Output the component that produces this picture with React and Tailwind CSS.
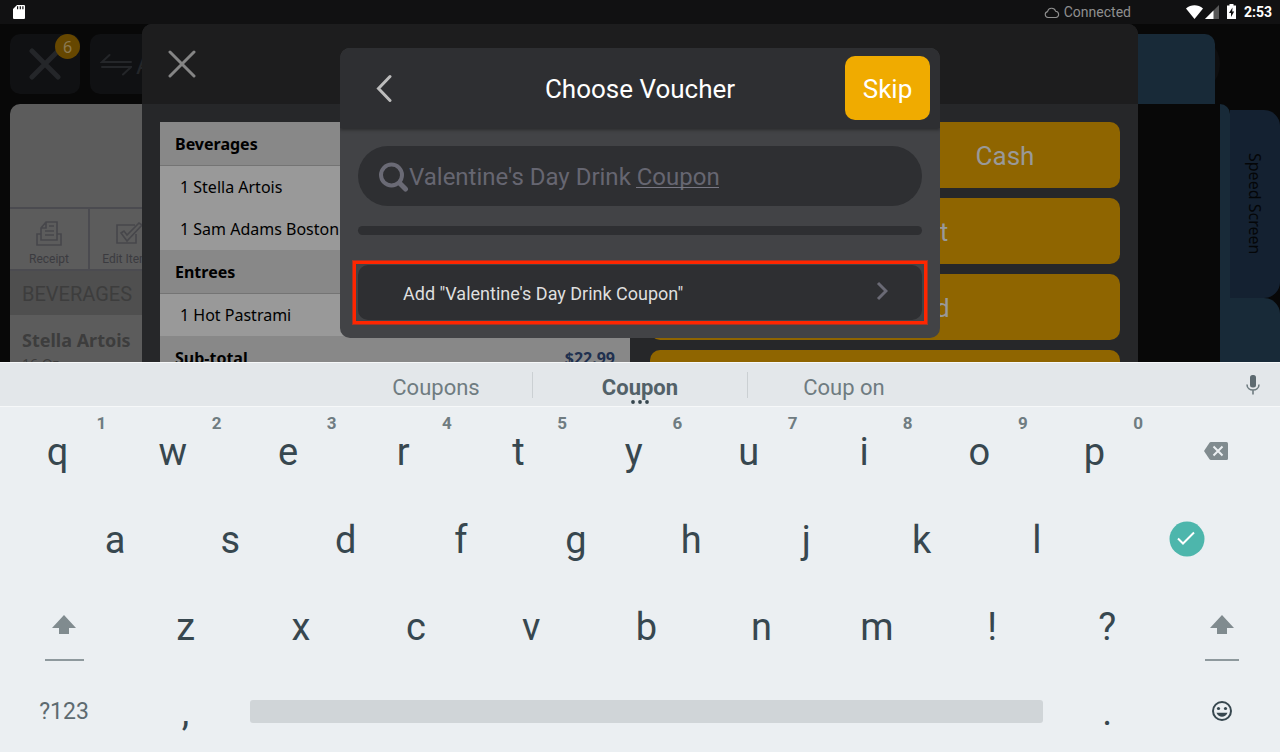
import React, { useState } from "react";

const orderLines = [
  { heading: "Beverages", items: ["1 Stella Artois", "1 Sam Adams Boston Lager"] },
  { heading: "Entrees", items: ["1 Hot Pastrami"] },
];

const payments = ["Split Credit", "Credit Card", "Gift Card"];

const topRow = ["q", "w", "e", "r", "t", "y", "u", "i", "o", "p"];
const homeRow = ["a", "s", "d", "f", "g", "h", "j", "k", "l"];
const bottomRow = ["z", "x", "c", "v", "b", "n", "m", "!", "?"];

const StatusBar = () => (
  <div className="flex h-6 shrink-0 items-center bg-[#111112] pl-3 pr-2">
    <svg className="h-4 w-4" viewBox="0 0 16 16" fill="#fff">
      <path
        fillRule="evenodd"
        d="M5 1h7a1 1 0 0 1 1 1v12a1 1 0 0 1-1 1H2a1 1 0 0 1-1-1V5zM5 2.200v3h1.200v-3zM7.700 2.200v3h1.200v-3zM10.300 2.200v3h1.200v-3z"
      />
    </svg>
    <div className="ml-auto flex items-center">
      <svg className="mr-1 h-4 w-4" viewBox="0 0 16 16" fill="none" stroke="#8f8f8f" strokeWidth="1.1">
        <path d="M4 13.500a3 3 0 0 1-.5-5.900A4.200 4.200 0 0 1 11.600 7.200a3.200 3.200 0 0 1 .6 6.300z" />
      </svg>
      <span className="mr-[55px] text-sm text-[#8f8f8f]">Connected</span>
      <svg className="mr-0.5 h-4 w-[17px]" viewBox="0 0 17 16" fill="#fff">
        <path d="M0 4.500C5 .3 12 .3 17 4.500L8.500 15z" />
      </svg>
      <svg className="mr-2 h-4 w-[14px]" viewBox="0 0 14 16">
        <path d="M14 1v14H0z" fill="#585858" />
        <path d="M8.500 6.500V15H0z" fill="#fff" />
      </svg>
      <svg className="mr-2 h-4 w-[9px]" viewBox="0 0 9 16">
        <path d="M2.500 0h4v1.500H9V15H0V1.500h2.500z" fill="#fff" />
        <path d="M5.500 3.500L2 9h2v4L7.200 7.500H5.200z" fill="#111112" />
      </svg>
      <span className="text-sm font-bold text-white">2:53</span>
    </div>
  </div>
);

// Order screen that stays dimmed behind the dialogs
const OrderScreen = () => (
  <div className="flex h-full flex-col bg-[#080808]">
    <div className="flex h-20 shrink-0 gap-2.5 pl-2.5 pt-2.5">
      <button className="relative flex h-[60px] w-[70px] items-center justify-center rounded-[10px] bg-[#101113]">
        <svg className="h-8 w-8" viewBox="0 0 32 32" stroke="#242629" strokeWidth="5" strokeLinecap="round">
          <path d="M3 3l26 26M29 3L3 29" />
        </svg>
        <span className="absolute right-0 top-0 flex h-[25px] w-[25px] items-center justify-center rounded-full bg-[#664700] font-['Noto_Sans'] text-base text-[#8c7a52]">
          6
        </span>
      </button>
      <button className="flex h-[60px] w-[160px] items-center gap-1 rounded-[10px] bg-[#101113] pl-2.5 pt-0.5 text-[26px] text-[#242629]">
        <svg className="h-6 w-[32px]" viewBox="0 0 32 24" fill="none" stroke="#242629" strokeWidth="2" strokeLinecap="round">
          <path d="M31 9H2l7.500-7M2 14h29l-8 7.500" />
        </svg>
        A
      </button>
      <div className="relative ml-auto mr-[65px] h-[70px] w-[300px]">
        <div className="absolute -right-[5px] top-0 h-[60px] w-[60px] rounded-full bg-[#0e0e0f]" />
        <div className="relative h-full rounded-tr-[10px] bg-[#182a38]" />
      </div>
    </div>
    <div className="flex min-h-0 flex-1 pl-2.5">
      <div className="mr-auto w-[400px] rounded-tl-[10px] bg-[#5c5c5c]">
        <div className="h-[103px]" />
        <div className="flex h-16 border-y-2 border-[#4b4b50] text-xs text-[#3b3b40]">
          <button className="flex w-20 flex-col items-center justify-end gap-1 border-r-2 border-[#4b4b50]">
            <svg className="h-[26px] w-[26px]" viewBox="0 0 26 26" fill="none" stroke="#47474b" strokeWidth="1.600">
              <path d="M5 13H1v11h24V13h-4M5 19V7l5-6h11v18zM5 7h5V1M13 5h5M9 10h9M9 14h9" />
            </svg>
            <span className="pb-0.5">Receipt</span>
          </button>
          <button className="flex w-20 flex-col items-center justify-end gap-1 border-r-2 border-[#4b4b50]">
            <svg className="h-[26px] w-[26px]" viewBox="0 0 26 26" fill="none" stroke="#47474b" strokeWidth="1.600">
              <path d="M19 4H1v18h19v-9M5 12l3-2 3 4L23 2l3 2L11 20z" />
            </svg>
            <span className="pb-0.5">Edit Items</span>
          </button>
        </div>
        <div className="flex h-11 items-center bg-[#4f4f4f] pl-3 pt-0.5 text-xl text-[#3d3d3d]">BEVERAGES</div>
        <div className="pl-3 pt-[11px] font-['Noto_Sans'] text-[#3d3d3d]">
          <p className="text-lg/7 font-bold">Stella Artois</p>
          <p className="text-sm/5">16 Oz</p>
        </div>
      </div>
      <div className="w-2.5 rounded-tr-[10px] bg-[#182a38]" />
      <div className="flex w-[50px] flex-col pt-1.5">
        <button className="flex h-[188px] items-center justify-center rounded-r-[16px] bg-[#142131] font-['Noto_Sans'] text-base text-[#040608] [writing-mode:vertical-rl]">
          Speed Screen
        </button>
        <div className="flex-1 rounded-tr-[16px] bg-[#182a38]" />
      </div>
    </div>
  </div>
);

const PayButton = ({ children }) => (
  <button className="flex h-[66px] w-full items-center justify-center rounded-[10px] bg-[#8f6500] pt-0.5 text-[26px] text-[#999]">
    {children}
  </button>
);

const PaymentDialog = () => (
  <div className="mx-auto h-full w-full max-w-[996px] overflow-hidden rounded-t-[10px] bg-[#262729]">
    <div className="flex h-20 items-center bg-[#1d1d1e] pl-[26px]">
      <button aria-label="Close">
        <svg className="h-7 w-7" viewBox="0 0 28 28" stroke="#858585" strokeWidth="3" strokeLinecap="round">
          <path d="M2 2l24 24M26 2L2 26" />
        </svg>
      </button>
    </div>
    <div className="grid grid-cols-2 gap-5 p-[18px]">
      <div className="bg-[#999] font-['Noto_Sans'] text-base text-black">
        {orderLines.map((group) => (
          <div key={group.heading}>
            <h3 className="flex h-11 items-center border-b border-[#747474] bg-[#888] pl-[15px] font-bold">
              {group.heading}
            </h3>
            {group.items.map((item) => (
              <p key={item} className="flex h-[42px] items-center pl-5">
                {item}
              </p>
            ))}
          </div>
        ))}
        <p className="flex h-11 items-center justify-between bg-[#888] px-[15px] font-bold">
          <span>Sub-total</span>
          <span className="text-[#20304f]">$22.99</span>
        </p>
      </div>
      <div className="flex flex-col gap-2.5">
        <div className="grid grid-cols-2 gap-2.5">
          <PayButton>Exact</PayButton>
          <PayButton>Cash</PayButton>
        </div>
        {payments.map((name) => (
          <PayButton key={name}>{name}</PayButton>
        ))}
      </div>
    </div>
  </div>
);

const VoucherDialog = () => {
  const [name, setName] = useState("Valentine's Day Drink Coupon");

  return (
    <div className="w-full max-w-[600px] overflow-hidden rounded-[10px] bg-[#424346]">
      <div className="grid h-20 grid-cols-[1fr_auto_1fr] items-center bg-[#2e2f32] pl-9 pr-2.5 shadow-[0_2px_3px_rgba(0,0,0,0.35)]">
        <button aria-label="Back" className="w-fit">
          <svg className="h-7 w-4" viewBox="0 0 16 28" fill="none" stroke="#bcbcbc" strokeWidth="3" strokeLinecap="round">
            <path d="M14 2.500L2.500 14.500l11.500 12" />
          </svg>
        </button>
        <h2 className="-ml-[26px] pt-0.5 text-[26px] text-white">Choose Voucher</h2>
        <button className="h-16 w-[85px] justify-self-end rounded-[10px] bg-[#f0ab00] pt-0.5 text-[26px] text-white">
          Skip
        </button>
      </div>
      <div className="p-[18px]">
        <label className="flex h-[60px] items-center rounded-full bg-[#2e2f32] pl-5 pr-6">
          <svg className="h-[31px] w-[31px] shrink-0" viewBox="0 0 31 31" fill="none" stroke="#6a6a75" strokeLinecap="round">
            <circle cx="13.500" cy="14" r="10.500" strokeWidth="4" />
            <path d="M21.500 22l6 6" strokeWidth="5" />
          </svg>
          <span className="relative flex-1">
            <input
              aria-label="Search vouchers"
              value={name}
              onChange={(e) => setName(e.target.value)}
              className="h-10 w-full bg-transparent pt-0.5 text-2xl text-[#666671] outline-none"
            />
            {/* spell-check underline below the last word */}
            <span className="absolute bottom-2 left-[227px] h-px w-[83px] bg-[#777783]" />
          </span>
        </label>
        <div className="mt-5 h-[9px] rounded-full bg-[#2e2f32]" />
        <button className="relative mt-[30px] flex h-[55px] w-full items-center justify-between rounded-[10px] bg-[#2e2f32] pl-[45px] pr-[34px] pt-0.5 text-lg text-[#dfdfdf]">
          Add "{name}"
          <svg className="mb-1.5 h-5 w-3" viewBox="0 0 12 20" fill="none" stroke="#6a6a75" strokeWidth="3">
            <path d="M2 2l8 8-8 8" />
          </svg>
          <span className="absolute -inset-x-[5px] -inset-y-1 border-[3px] border-[#ff2600] shadow-[0_0_0_1px_#a43425]" />
        </button>
      </div>
    </div>
  );
};

const Key = ({ char, hint }) => (
  <button className="relative flex h-full basis-0 grow-18 items-center justify-center text-[38px] text-[#37474f]">
    <span className="pt-[3px]">{char}</span>
    {hint && <span className="absolute right-[9px] top-1.5 text-[17px]/5 font-bold text-[#6f7c81]">{hint}</span>}
  </button>
);

const ShiftIcon = () => (
  <svg className="h-5 w-6" viewBox="0 0 24 20" fill="#808b8f">
    <path d="M12 0l12 13h-7v6H7v-6H0z" />
  </svg>
);

const Keyboard = () => (
  <div className="flex h-[390px] shrink-0 flex-col bg-[#ebeff2]">
    <div className="relative flex h-[45px] shrink-0 items-center justify-center border-y border-[#f6f8f9] bg-[#e3e7ea] text-[22px] text-[#6f7c81]">
      <button className="w-48 pt-1.5">Coupons</button>
      <button className="relative h-[26px] w-[216px] border-x border-[#cbd0d3] font-bold text-[#526168]">
        <span className="flex h-full items-center justify-center pt-1.5">Coupon</span>
        <svg className="absolute -bottom-1.5 left-1/2 h-1 w-[18px] -translate-x-1/2" viewBox="0 0 18 4" fill="#37474f">
          <circle cx="2" cy="2" r="1.900" />
          <circle cx="9" cy="2" r="1.900" />
          <circle cx="16" cy="2" r="1.900" />
        </svg>
      </button>
      <button className="w-48 pt-1.5">Coup on</button>
      <button aria-label="Voice input" className="absolute right-5">
        <svg className="h-5 w-[14px]" viewBox="0 0 14 20">
          <rect x="4" y="0" width="6" height="12.500" rx="2.500" fill="#5d6a70" />
          <path d="M1 9.500c0 7.300 12 7.300 12 0M7 15v4.500" fill="none" stroke="#6f7c81" strokeWidth="1.600" />
        </svg>
      </button>
    </div>
    <div className="flex h-[88px] items-center">
      {topRow.map((char, i) => (
        <Key key={char} char={char} hint={String((i + 1) % 10)} />
      ))}
      <button aria-label="Delete" className="flex basis-0 grow-20 justify-center">
        <svg className="h-[18px] w-6" viewBox="0 0 24 18">
          <path d="M7 0h15.500A1.500 1.500 0 0 1 24 1.500v15a1.500 1.500 0 0 1-1.500 1.500H7a2 2 0 0 1-1.500-.8L0 9 5.500.8A2 2 0 0 1 7 0z" fill="#808b8f" />
          <path d="M9.500 4.500l9 9M18.500 4.500l-9 9" stroke="#ebeff2" strokeWidth="2" />
        </svg>
      </button>
    </div>
    <div className="flex h-[87px] items-center">
      <div className="basis-0 grow-9" />
      {homeRow.map((char) => (
        <Key key={char} char={char} />
      ))}
      <button aria-label="Done" className="flex basis-0 grow-29 justify-center">
        <svg className="h-9 w-9" viewBox="0 0 36 36" fill="none">
          <circle cx="18" cy="18" r="17.500" fill="#4db6ac" />
          <path d="M9 17.500l5 5L25 11.500" stroke="#fff" strokeWidth="2" />
        </svg>
      </button>
    </div>
    <div className="flex h-[87px] items-center">
      <button aria-label="Shift" className="flex basis-0 grow-20 flex-col items-center gap-6 pt-6">
        <ShiftIcon />
        <span className="h-0.5 w-[39px] bg-[#8e999d]" />
      </button>
      {bottomRow.map((char) => (
        <Key key={char} char={char} />
      ))}
      <button aria-label="Shift" className="flex basis-0 grow-18 flex-col items-center gap-6 pt-6">
        <ShiftIcon />
        <span className="h-0.5 w-[34px] bg-[#8e999d]" />
      </button>
    </div>
    <div className="flex flex-1 items-center">
      <button className="basis-0 grow-20 pt-1 text-[23px] text-[#5d6a70]">?123</button>
      <Key char="," />
      <div className="basis-0 grow-126">
        <div className="mx-[7px] mt-0.5 flex">
          <button aria-label="Space" className="h-[23px] w-full rounded-[3px] bg-[#d0d5d8]" />
        </div>
      </div>
      <Key char="." />
      <button aria-label="Emoji" className="flex basis-0 grow-18 justify-center">
        <svg className="h-5 w-5" viewBox="0 0 20 20" fill="#37474f">
          <circle cx="10" cy="10" r="9" fill="none" stroke="#37474f" strokeWidth="2" />
          <circle cx="6.500" cy="7.500" r="1.600" />
          <circle cx="13.500" cy="7.500" r="1.600" />
          <path d="M4.500 11.800h11c-2 5.200-9 5.200-11 0z" />
        </svg>
      </button>
    </div>
  </div>
);

const App = () => (
  <div className="flex h-screen flex-col overflow-hidden bg-[#080808] font-[Roboto,sans-serif]">
    <StatusBar />
    <div className="relative min-h-0 flex-1 overflow-hidden">
      <OrderScreen />
      <div className="absolute inset-0">
        <PaymentDialog />
      </div>
      <div className="absolute inset-0 flex items-start justify-center pt-6">
        <VoucherDialog />
      </div>
    </div>
    <Keyboard />
  </div>
);

export default App;
